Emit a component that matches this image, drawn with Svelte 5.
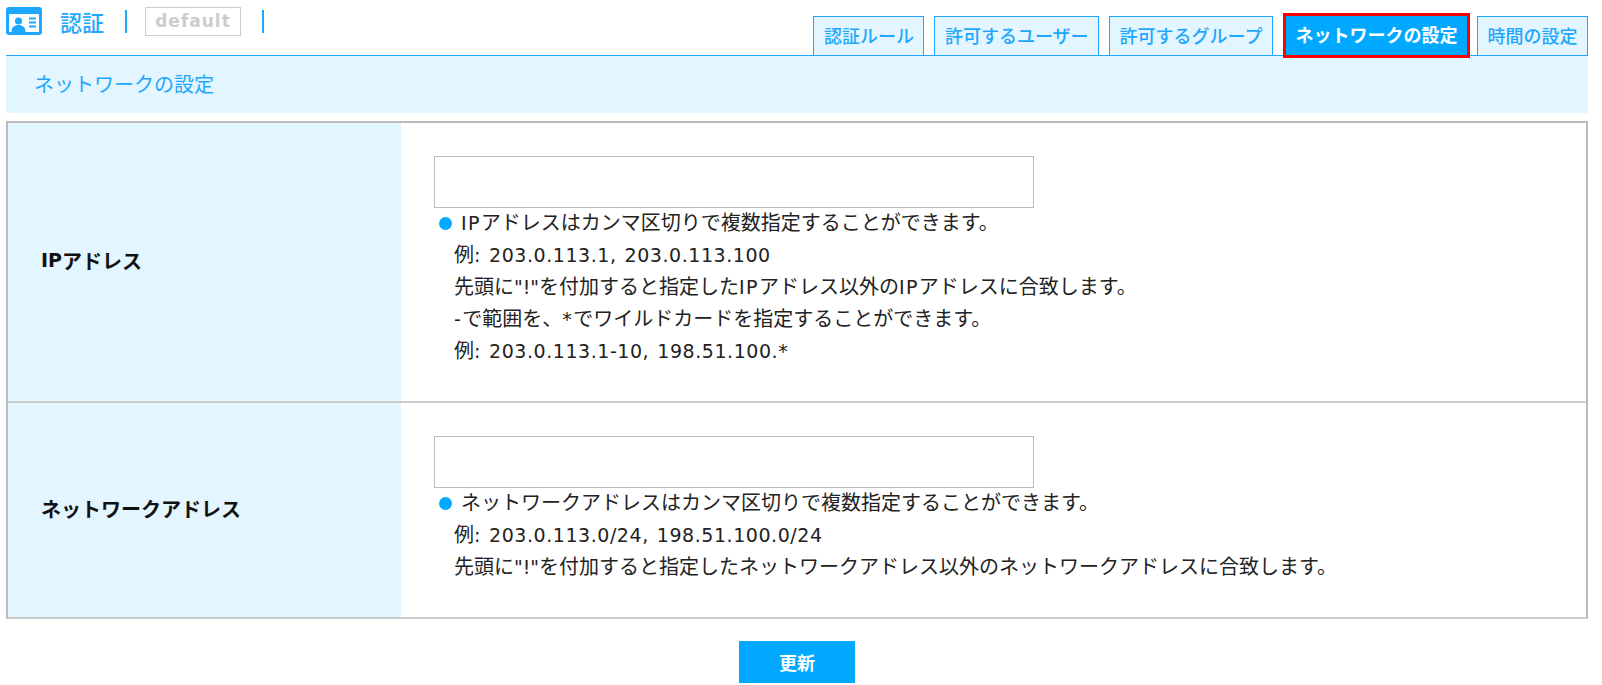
<script>
  const tabs = [
    { label: '認証ルール' },
    { label: '許可するユーザー' },
    { label: '許可するグループ' },
    { label: 'ネットワークの設定', active: true },
    { label: '時間の設定' }
  ];
  const rows = [
    {
      label: 'IPアドレス',
      first: 'IPアドレスはカンマ区切りで複数指定することができます。',
      lines: [
        '例: 203.0.113.1, 203.0.113.100',
        '先頭に"!"を付加すると指定したIPアドレス以外のIPアドレスに合致します。',
        '-で範囲を、*でワイルドカードを指定することができます。',
        '例: 203.0.113.1-10, 198.51.100.*'
      ]
    },
    {
      label: 'ネットワークアドレス',
      first: 'ネットワークアドレスはカンマ区切りで複数指定することができます。',
      lines: [
        '例: 203.0.113.0/24, 198.51.100.0/24',
        '先頭に"!"を付加すると指定したネットワークアドレス以外のネットワークアドレスに合致します。'
      ]
    }
  ];
  // Latin runs use a wider face than the Japanese text around them.
  const parts = (s) =>
    s.split(/([\x20-\x7e]+)/).filter(Boolean).map((text) => ({
      text,
      latin: /^[\x20-\x7e]/.test(text),
      num: /\d/.test(text),
      tight: text.includes('!')
    }));
</script>

{#snippet mixed(s)}{#each parts(s) as p}{#if p.latin}<span class="lat" class:num={p.num} class:tight={p.tight}>{p.text}</span>{:else}{p.text}{/if}{/each}{/snippet}

<div class="page">
  <header class="top">
    <div class="title">
      <svg class="icon" viewBox="0 0 36 28" width="36" height="28" aria-hidden="true">
        <rect width="36" height="28" rx="3" fill="#1ea7fd" />
        <rect x="3" y="7" width="30" height="18" fill="#fff" />
        <circle cx="12.5" cy="14" r="3.6" fill="#1ea7fd" />
        <path d="M5.5 25c0-5 3-7 7-7s7 2 7 7z" fill="#1ea7fd" />
        <path d="M23 11.5h7M23 15.500h7M23 19.500h7" stroke="#1ea7fd" stroke-width="1.800" />
      </svg>
      <span class="name">認証</span>
      <span class="bar"></span>
      <span class="tag">default</span>
      <span class="bar"></span>
    </div>
    <nav class="tabs">
      {#each tabs as t}
        <a class="tab" class:active={t.active} href="#top">{t.label}</a>
      {/each}
    </nav>
  </header>

  <div class="sub">ネットワークの設定</div>

  <div class="table">
    {#each rows as r}
      <div class="row">
        <div class="head">{@render mixed(r.label)}</div>
        <div class="cell">
          <input class="field" type="text" />
          <div class="note"><span class="dot"></span>{@render mixed(r.first)}</div>
          {#each r.lines as l}
            <div class="line">{@render mixed(l)}</div>
          {/each}
        </div>
      </div>
    {/each}
  </div>

  <div class="actions">
    <button class="submit" type="button">更新</button>
  </div>
</div>

<style>
  :global(body) {
    margin: 0;
    background: #fff;
  }
  .page {
    padding: 0 14px 0 6px;
    font-family: "Noto Sans CJK JP", "Noto Sans", sans-serif;
    font-size: 20px;
    color: #222;
  }
  .lat {
    font-family: "DejaVu Sans", sans-serif;
    font-size: 19px;
    line-height: 1;
    letter-spacing: 1.4px;
  }
  .lat.num {
    letter-spacing: 0.55px;
    word-spacing: 1.5px;
  }
  .lat.tight {
    letter-spacing: 0;
  }
  .top {
    display: flex;
    justify-content: space-between;
    align-items: flex-end;
    height: 55px;
    border-bottom: 1px solid #1ea7fd;
  }
  .title {
    display: flex;
    align-items: center;
    align-self: flex-start;
    padding-top: 6px;
    height: 30px;
  }
  .icon {
    display: block;
  }
  .name {
    margin-left: 18px;
    font-size: 22px;
    font-weight: 500;
    color: #1ea7fd;
  }
  .bar {
    width: 2px;
    height: 23px;
    margin-left: 21px;
    background: #1ea7fd;
  }
  .tag {
    box-sizing: border-box;
    width: 96px;
    height: 29px;
    margin-left: 18px;
    border: 1px solid #ccc;
    text-align: center;
    font-family: "DejaVu Sans", sans-serif;
    font-size: 17px;
    font-weight: 700;
    line-height: 26px;
    color: #ccc;
    letter-spacing: 1px;
  }
  .tabs {
    display: flex;
    align-items: flex-end;
  }
  .tab {
    box-sizing: border-box;
    display: block;
    height: 39px;
    margin-left: 10px;
    padding: 0 9.5px;
    border: 1px solid #1ea7fd;
    border-bottom: 0;
    background: #e3f5ff;
    color: #1ea7fd;
    font-size: 18px;
    font-weight: 500;
    line-height: 37px;
    text-decoration: none;
    white-space: nowrap;
  }
  .tab.active {
    position: relative;
    top: 3px;
    height: 45px;
    margin: 0 -3px 0 10px;
    padding: 0 9.5px;
    border: 3px solid #f00;
    background: #00a8ff;
    color: #fff;
    font-weight: 700;
    line-height: 37px;
  }
  .sub {
    height: 57px;
    padding-left: 28px;
    background: #e3f5ff;
    color: #1ea7fd;
    font-size: 20px;
    line-height: 56px;
  }
  .table {
    margin-top: 8px;
    border: 2px solid #bbb;
    border-bottom-color: #ccc;
  }
  .row {
    display: flex;
  }
  .row + .row {
    border-top: 2px solid #ccc;
  }
  .head {
    display: flex;
    align-items: center;
    flex: 0 0 393px;
    box-sizing: border-box;
    padding: 0 0 4px 33px;
    background: #e3f5ff;
    color: #111;
    font-weight: 700;
  }
  .head .lat {
    font-weight: 700;
    letter-spacing: 0;
  }
  .cell {
    flex: 1;
    padding: 33px 0 33px 33px;
  }
  .field {
    display: block;
    box-sizing: border-box;
    width: 600px;
    height: 52px;
    border: 1px solid #bbb;
    background: #fff;
    margin: 0;
  }
  .note,
  .line {
    height: 32px;
    line-height: 28px;
    white-space: nowrap;
  }
  .dot {
    display: inline-block;
    width: 13px;
    height: 13px;
    margin: 0 9px 0 5px;
    border-radius: 50%;
    background: #00a8ff;
  }
  .line {
    padding-left: 20px;
  }
  .actions {
    display: flex;
    justify-content: center;
    padding: 22px 0 0 0;
  }
  .submit {
    width: 116px;
    height: 42px;
    border: 0;
    background: #00a8ff;
    color: #fff;
    font-family: inherit;
    font-size: 18px;
    font-weight: 700;
  }
</style>
